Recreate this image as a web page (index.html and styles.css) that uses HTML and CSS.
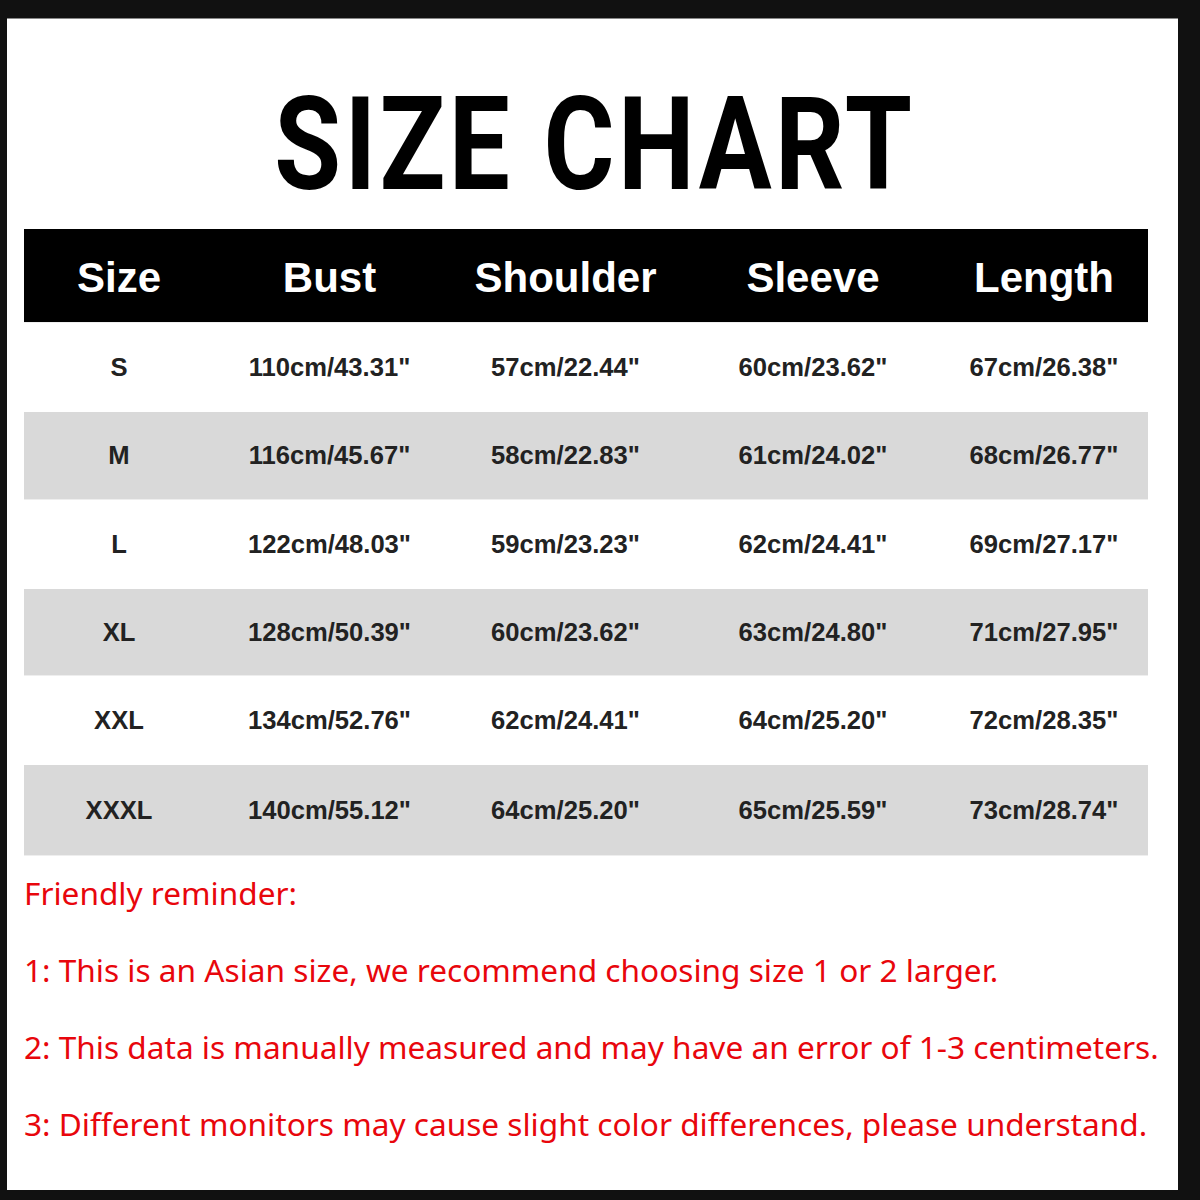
FILE: index.html
```html
<!DOCTYPE html>
<html lang="en">
<head>
<meta charset="utf-8">
<title>Size Chart</title>
<link rel="stylesheet" href="styles.css">
</head>
<body>
<div class="frame">
  <div class="title-wrap"><h1 class="title">SIZE CHART</h1></div>
  <div class="table">
    <div class="row head"><div>Size</div><div>Bust</div><div>Shoulder</div><div>Sleeve</div><div>Length</div></div>
    <div class="row r1"><div>S</div><div>110cm/43.31"</div><div>57cm/22.44"</div><div>60cm/23.62"</div><div>67cm/26.38"</div></div>
    <div class="row r2 gray"><div>M</div><div>116cm/45.67"</div><div>58cm/22.83"</div><div>61cm/24.02"</div><div>68cm/26.77"</div></div>
    <div class="row r3"><div>L</div><div>122cm/48.03"</div><div>59cm/23.23"</div><div>62cm/24.41"</div><div>69cm/27.17"</div></div>
    <div class="row r4 gray"><div>XL</div><div>128cm/50.39"</div><div>60cm/23.62"</div><div>63cm/24.80"</div><div>71cm/27.95"</div></div>
    <div class="row r5"><div>XXL</div><div>134cm/52.76"</div><div>62cm/24.41"</div><div>64cm/25.20"</div><div>72cm/28.35"</div></div>
    <div class="row r6 gray"><div>XXXL</div><div>140cm/55.12"</div><div>64cm/25.20"</div><div>65cm/25.59"</div><div>73cm/28.74"</div></div>
  </div>
  <div class="notes">
    <p>Friendly reminder:</p>
    <p>1: This is an Asian size, we recommend choosing size 1 or 2 larger.</p>
    <p>2: This data is manually measured and may have an error of 1-3 centimeters.</p>
    <p>3: Different monitors may cause slight color differences, please understand.</p>
  </div>
</div>
</body>
</html>
```
FILE: styles.css
```css
html, body {
  margin: 0;
  padding: 0;
  background: #111111;
}
body {
  width: 1200px;
  height: 1200px;
  overflow: hidden;
  padding: 18px 22px 10px 7px;
  box-sizing: border-box;
}
.frame {
  background: #ffffff;
  height: 1172px;
  display: flex;
  flex-direction: column;
  border-top: 1px solid #888;
  box-sizing: border-box;
}
.title-wrap {
  height: 210px;
  display: flex;
  justify-content: center;
  align-items: flex-start;
}
.title {
  margin: 61px 0 0 0;
  font-family: Roboto, "Liberation Sans", sans-serif;
  font-weight: 700;
  font-size: 130px;
  line-height: 130px;
  color: #000;
  letter-spacing: 4px;
  transform: scaleX(0.835);
  position: relative;
  left: 2px;
}
.table {
  margin-left: 17px;
  width: 1124px;
  display: flex;
  flex-direction: column;
}
.row {
  display: grid;
  grid-template-columns: 190px 231px 241px 254px 208px;
  height: 89px;
  align-items: center;
  text-align: center;
  font-family: "Liberation Sans", Arial, sans-serif;
  font-weight: 700;
  font-size: 25.6px;
  color: #222;
  box-shadow: 0 1px 0 #eeeeee;
}
.row.head {
  height: 93px;
  padding-top: 4px;
  box-sizing: border-box;
  background: #000;
  color: #fff;
  font-size: 42px;
}
.row.gray {
  background: #d9d9d9;
}
.r2 { height: 87px; }
.r4 { height: 86px; }
.r1, .r3, .r5 { height: 90px; }
.r6 { height: 90px; }
.notes {
  padding: 0 0 0 17px;
  margin-top: 12px;
  font-family: "Noto Sans", "Open Sans", sans-serif;
  color: #e8060c;
  font-size: 31.6px;
}
.notes p {
  margin: 0;
  height: 77px;
  line-height: 52px;
}
```
